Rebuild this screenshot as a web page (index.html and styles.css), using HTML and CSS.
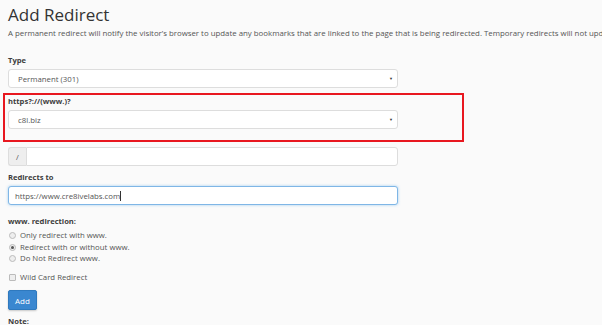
FILE: index.html
```html
<!DOCTYPE html>
<html lang="en">
<head>
    <meta charset="UTF-8">
    <meta name="viewport" content="width=device-width, initial-scale=1.0">
    <title>Add Redirect</title>
    <link rel="stylesheet" href="styles.css">
</head>
<body>
    <div class="page">
        <h1>Add Redirect</h1>
        <p class="intro">A permanent redirect will notify the visitor’s browser to update any bookmarks that are linked to the page that is being redirected. Temporary redirects will not update the visitor’s bookmarks.</p>

        <form class="redirect-form">
            <div class="field">
                <label class="field-label">Type</label>
                <div class="select-box">
                    <span>Permanent (301)</span>
                    <span class="caret">▼</span>
                </div>
            </div>

            <div class="field highlight">
                <label class="field-label">https?://(www.)?</label>
                <div class="select-box">
                    <span>c8l.biz</span>
                    <span class="caret">▼</span>
                </div>
            </div>

            <div class="input-group">
                <span class="addon">/</span>
                <input type="text" class="text-input">
            </div>

            <div class="field">
                <label class="field-label">Redirects to</label>
                <div class="text-input focused">https://www.cre8ivelabs.com<span class="cursor"></span></div>
            </div>

            <div class="field options">
                <label class="field-label">www. redirection:</label>
                <div class="option"><span class="radio"></span>Only redirect with www.</div>
                <div class="option"><span class="radio checked"></span>Redirect with or without www.</div>
                <div class="option"><span class="radio"></span>Do Not Redirect www.</div>
            </div>

            <div class="option wildcard"><span class="checkbox"></span>Wild Card Redirect</div>

            <button type="button" class="add-button">Add</button>
        </form>

        <div class="note-title">Note:</div>
    </div>
</body>
</html>
```

FILE: styles.css
```css
body {
    font-family: "Open Sans", Arial, sans-serif;
    background-color: #fafafa;
    color: #333;
    margin: 0;
    overflow: hidden;
}
.page {
    padding: 0 8px;
    white-space: nowrap;
}
h1 {
    font-size: 17px;
    font-weight: 400;
    color: #333;
    margin: 0;
    padding-top: 2.5px;
    line-height: 24px;
}
.intro {
    font-size: 7.85px;
    color: #555;
    margin: 0.5px 0 0;
    line-height: 12px;
}
.redirect-form {
    margin-top: 15px;
}
.field {
    margin-bottom: 5px;
}
.field-label {
    display: block;
    font-size: 7.6px;
    font-weight: 700;
    color: #3d3d3d;
    line-height: 12px;
    margin-bottom: 3px;
}
.select-box,
.text-input {
    box-sizing: border-box;
    width: 390px;
    height: 19px;
    background-color: #fff;
    border: 1px solid #ddd;
    border-radius: 3px;
    font-size: 7.8px;
    color: #555;
    padding: 0 9px;
    display: flex;
    align-items: center;
    justify-content: space-between;
    font-family: inherit;
}
.caret {
    font-size: 4px;
    color: #333;
    margin-right: -5px;
}
.highlight {
    margin: 0 0 5px -5px;
    padding: 0 3px 11px;
    border: 2px solid #e8171f;
    width: 451px;
}
.input-group {
    display: flex;
    width: 390px;
    height: 19px;
    margin-bottom: 5px;
}
.addon {
    box-sizing: border-box;
    width: 18px;
    background-color: #eee;
    border: 1px solid #ddd;
    border-right: none;
    border-radius: 3px 0 0 3px;
    font-size: 7.6px;
    color: #555;
    display: flex;
    align-items: center;
    justify-content: center;
}
.input-group .text-input {
    width: auto;
    flex: 1;
    height: 19px;
    border-radius: 0 3px 3px 0;
    outline: none;
}
.text-input.focused {
    justify-content: flex-start;
    padding-left: 6px;
    border-color: #7fb6e6;
    box-shadow: 0 0 3px rgba(102, 175, 233, 0.6);
}
.cursor {
    display: inline-block;
    width: 1px;
    height: 10px;
    background-color: #333;
}
.options {
    margin-top: 10px;
}
.option {
    font-size: 7.8px;
    color: #555;
    line-height: 11.5px;
    display: flex;
    align-items: center;
}
.radio,
.checkbox {
    box-sizing: border-box;
    width: 7px;
    height: 7px;
    border: 1px solid #bbb;
    background-color: #eee;
    border-radius: 50%;
    margin: 0 4px 0 1px;
    display: inline-flex;
    align-items: center;
    justify-content: center;
}
.radio.checked::after {
    content: "";
    width: 3px;
    height: 3px;
    border-radius: 50%;
    background-color: #555;
}
.checkbox {
    border-radius: 1px;
}
.wildcard {
    margin-top: 7px;
}
.add-button {
    display: block;
    margin-top: 7px;
    width: 29px;
    height: 20px;
    padding: 0;
    background-color: #3a87d0;
    border: 1px solid #2f79be;
    border-radius: 2px;
    color: #fff;
    font-family: inherit;
    font-size: 8px;
    box-shadow: 0 1px 2px rgba(0, 0, 0, 0.2);
}
.note-title {
    margin-top: 6px;
    font-size: 7.6px;
    font-weight: 700;
    color: #3d3d3d;
}
```
